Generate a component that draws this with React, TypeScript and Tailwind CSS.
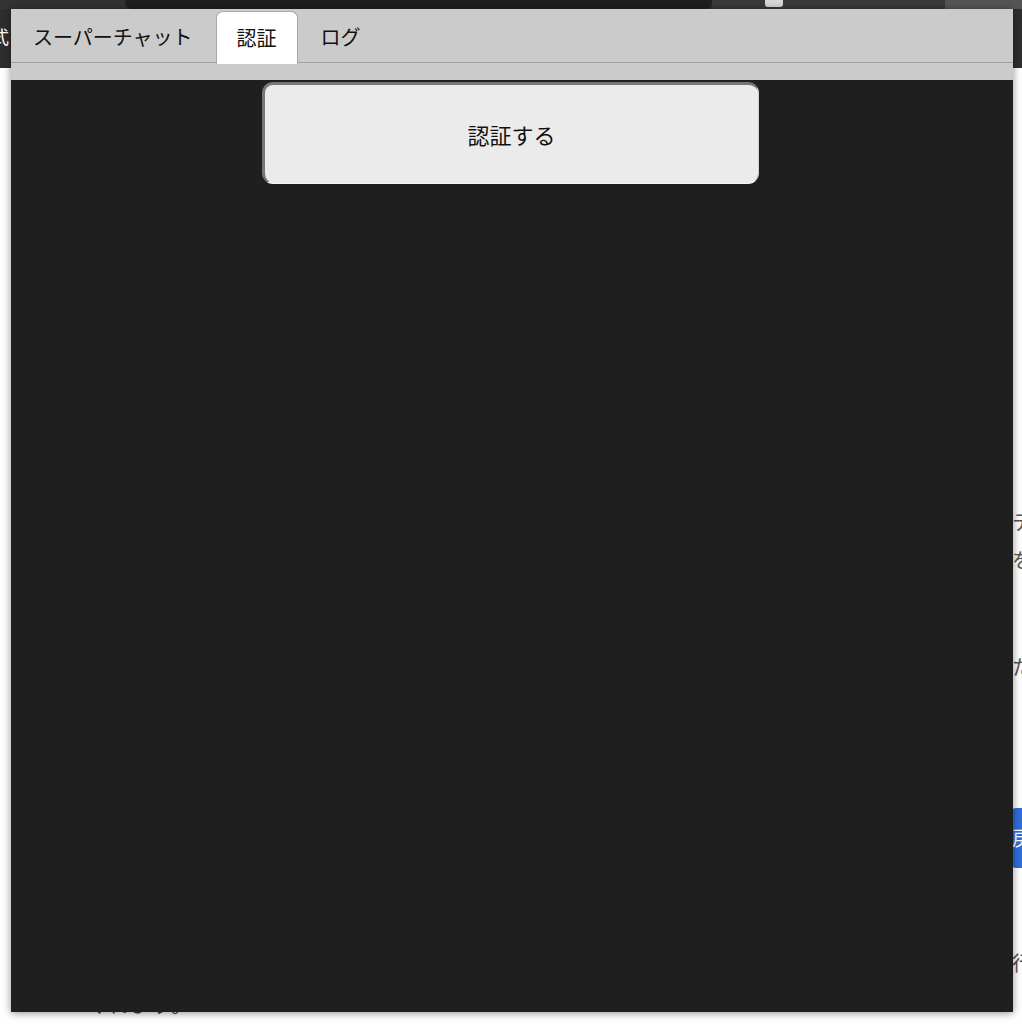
import React from "react";

const font = { fontFamily: '"Noto Sans CJK JP", "Noto Sans", sans-serif' };

export default function App() {
  return (
    <div className="relative w-[1022px] h-[1024px] overflow-hidden bg-white" style={font}>
      {/* page behind the window */}
      <div className="flex flex-col w-full h-full">
        <div className="relative h-[68px] bg-[#2e2e2e] shrink-0 flex">
          <div className="w-[125px] h-[9px] bg-[#333333]" />
          <div className="w-[587px] h-[9px] bg-[#1f1f1f] rounded-b-[8px]" />
          <div className="w-[233px] h-[9px] bg-[#3a3a3a] flex">
            <div className="ml-[53px] w-[18px] h-[7px] bg-[#d8d8d8] rounded-b-[3px]" />
          </div>
          <div className="w-[77px] h-[9px] bg-[#555555]" />
          <div className="absolute left-[-9px] top-[24px] text-[18px] leading-[24px] text-white">式</div>
        </div>
        <div className="flex flex-col pl-[1012px] text-[20px] leading-[28px] text-[#555] whitespace-nowrap">
          <div className="mt-[440px]">テ</div>
          <div className="mt-[10px]">を</div>
          <div className="mt-[79px]">た</div>
          <div className="mt-[127px] h-[60px] w-[60px] bg-[#2f6ee0] text-white flex items-center rounded-[4px]">戻</div>
          <div className="mt-[81px]">行</div>
        </div>
        <div className="mt-[11px] pl-[85px] text-[22px] leading-[28px] text-[#444] whitespace-nowrap">くれます。</div>
      </div>

      {/* window */}
      <div className="absolute left-[11px] top-[9px] w-[1002px] h-[1003px] flex flex-col shadow-[0_1px_8px_rgba(0,0,0,0.45)]">
        <div className="bg-[#cbcbcb] shrink-0">
          <div className="flex gap-[3px] px-[2px] pt-[2px] border-b border-[#a2a2a2] h-[54px]">
            <div className="h-[52px] px-[20px] flex items-center text-[20px] text-[#111]">スーパーチャット</div>
            <div className="h-[53px] -mb-[1px] px-[20px] flex items-center text-[20px] text-[#111] bg-white border border-b-0 border-[#a8a8a8] rounded-t-[7px]">認証</div>
            <div className="h-[52px] px-[20px] flex items-center text-[20px] text-[#111]">ログ</div>
          </div>
          <div className="h-[17px]" />
        </div>
        <div className="flex-1 bg-[#1f1f1f] flex flex-col items-center">
          <button
            className="mt-[2px] w-[497px] h-[102px] -ml-[3px] bg-[#ebebeb] rounded-[11px] border-t-[3px] border-l-[3px] border-r border-b border-t-[#767676] border-l-[#767676] border-r-[#d0d0d0] border-b-[#f5f5f5] text-[22px] text-[#111] flex items-center justify-center"
            style={font}
          >
            認証する
          </button>
        </div>
      </div>
    </div>
  );
}
